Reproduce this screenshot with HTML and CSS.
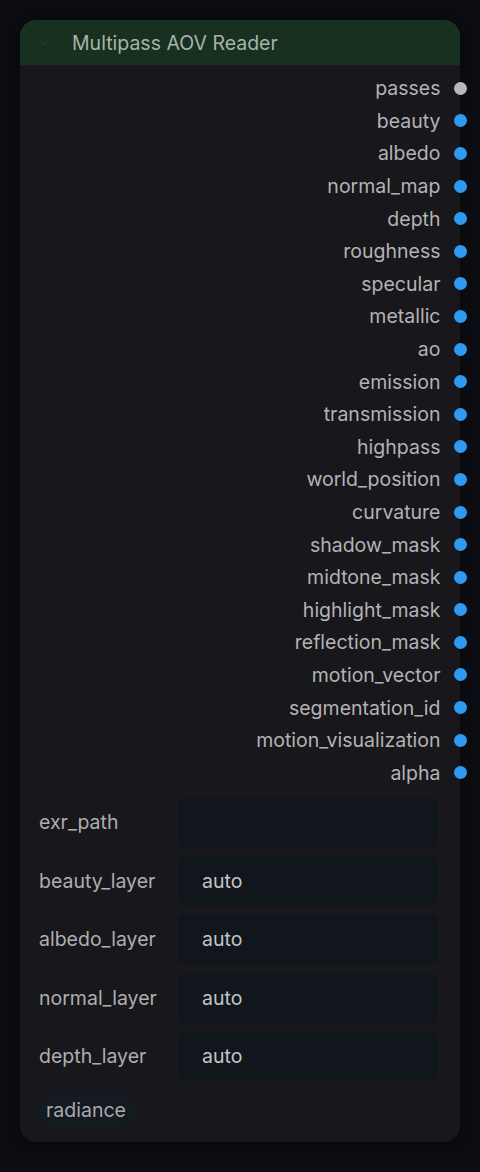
FILE: index.html
```html
<!DOCTYPE html>
<html>
<head>
<meta charset="utf-8">
<link rel="stylesheet" href="styles.css">
</head>
<body>
<div class="node">
  <div class="header">
    <svg class="chev" width="12" height="12" viewBox="0 0 12 12"><path d="M2 4 L6 8 L10 4" fill="none" stroke="#1f3827" stroke-width="1.6"/></svg>
    <span class="title">Multipass AOV Reader</span>
  </div>
  <div class="outputs">
    <div class="out"><span>passes</span><i class="dot grey"></i></div>
    <div class="out"><span>beauty</span><i class="dot"></i></div>
    <div class="out"><span>albedo</span><i class="dot"></i></div>
    <div class="out"><span>normal_map</span><i class="dot"></i></div>
    <div class="out"><span>depth</span><i class="dot"></i></div>
    <div class="out"><span>roughness</span><i class="dot"></i></div>
    <div class="out"><span>specular</span><i class="dot"></i></div>
    <div class="out"><span>metallic</span><i class="dot"></i></div>
    <div class="out"><span>ao</span><i class="dot"></i></div>
    <div class="out"><span>emission</span><i class="dot"></i></div>
    <div class="out"><span>transmission</span><i class="dot"></i></div>
    <div class="out"><span>highpass</span><i class="dot"></i></div>
    <div class="out"><span>world_position</span><i class="dot"></i></div>
    <div class="out"><span>curvature</span><i class="dot"></i></div>
    <div class="out"><span>shadow_mask</span><i class="dot"></i></div>
    <div class="out"><span>midtone_mask</span><i class="dot"></i></div>
    <div class="out"><span>highlight_mask</span><i class="dot"></i></div>
    <div class="out"><span>reflection_mask</span><i class="dot"></i></div>
    <div class="out"><span>motion_vector</span><i class="dot"></i></div>
    <div class="out"><span>segmentation_id</span><i class="dot"></i></div>
    <div class="out"><span>motion_visualization</span><i class="dot"></i></div>
    <div class="out"><span>alpha</span><i class="dot"></i></div>
  </div>
  <div class="widgets">
    <div class="w"><span class="lbl">exr_path</span><div class="box"></div></div>
    <div class="w"><span class="lbl">beauty_layer</span><div class="box">auto</div></div>
    <div class="w"><span class="lbl">albedo_layer</span><div class="box">auto</div></div>
    <div class="w"><span class="lbl">normal_layer</span><div class="box">auto</div></div>
    <div class="w"><span class="lbl">depth_layer</span><div class="box">auto</div></div>
  </div>
  <div class="foot"><span class="pill">radiance</span></div>
</div>
</body>
</html>
```
FILE: styles.css
```css
html, body {
  margin: 0;
  padding: 0;
  background: #0b0d12;
  width: 480px;
  height: 1172px;
  overflow: hidden;
  font-family: Inter, "Noto Sans", sans-serif;
}
body {
  padding: 20px 20px 0 20px;
  box-sizing: border-box;
}
.node {
  width: 440px;
  height: 1122px;
  background: #18171b;
  border-radius: 16px;
  box-sizing: border-box;
  display: flex;
  flex-direction: column;
  box-shadow: 0 0 12px rgba(0,0,0,0.5);
}
.header {
  height: 45px;
  background: #17301f;
  border-radius: 16px 16px 0 0;
  display: flex;
  align-items: center;
  padding-left: 18px;
  gap: 22px;
}
.chev { flex: none; }
.title {
  color: #a7b3aa;
  font-size: 19.5px;
}
.outputs {
  padding-top: 7px;
  display: flex;
  flex-direction: column;
}
.out {
  height: 32.6px;
  display: flex;
  align-items: center;
  justify-content: flex-end;
  gap: 13px;
  margin-right: -6.5px;
}
.out span {
  color: #b3b3b6;
  font-size: 19.5px;
}
.dot {
  width: 13px;
  height: 13px;
  border-radius: 50%;
  background: #2f9bf0;
  display: block;
}
.dot.grey { background: #b8b8b8; }
.widgets {
  margin-top: 8px;
  padding: 0 22px 0 19px;
  display: flex;
  flex-direction: column;
  gap: 8.6px;
}
.w {
  height: 50px;
  display: flex;
  align-items: center;
}
.lbl {
  width: 139px;
  color: #aeaeb1;
  font-size: 19.5px;
}
.box {
  flex: 1;
  height: 50px;
  background: #11151c;
  border-radius: 6px;
  display: flex;
  align-items: center;
  padding-left: 24px;
  color: #c4c4c6;
  font-size: 19.5px;
}
.foot {
  padding: 10px 0 0 16px;
}
.pill {
  display: inline-block;
  background: #141a20;
  color: #a9a9ad;
  font-size: 19.5px;
  padding: 7px 12px 7px 10px;
  border-radius: 18px;
}
```
